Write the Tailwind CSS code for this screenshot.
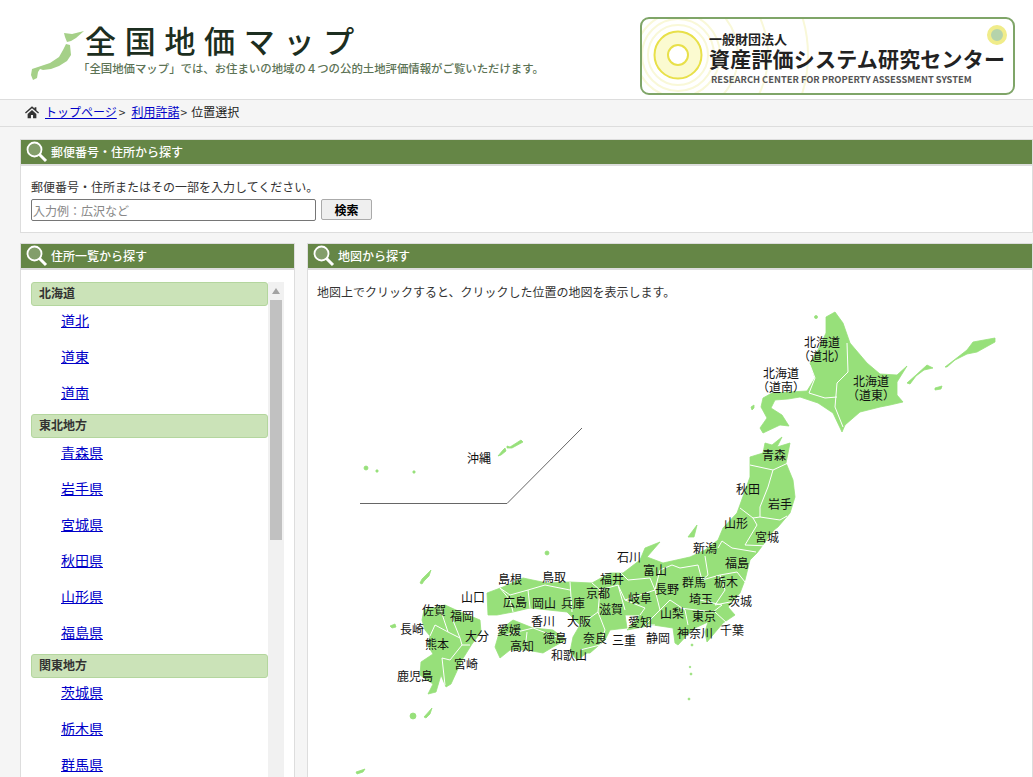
<!DOCTYPE html>
<html lang="ja">

<head>
  <meta charset="UTF-8" />
  <meta name="viewport" content="width=device-width, initial-scale=1.0" />
  <title>全国地価マップ</title>
  <script src="https://cdn.jsdelivr.net/npm/@tailwindcss/browser@4"></script>
</head>

<body class="h-[777px] overflow-hidden bg-[#f5f5f5] text-xs text-[#333] font-['Noto_Sans_CJK_JP','Noto_Sans',sans-serif]">

  <!-- ヘッダー -->
  <header class="flex h-[100px] justify-between border-b border-[#ddd] bg-white">
    <div class="ml-[30px] flex items-start">
      <svg class="mt-[29px] h-[48px] w-[48px] overflow-visible" viewBox="30 29 48 48">
        <path fill="#a5d088" d="M64 33l8 1 12-3-8 7-5 3-4 1-2-5zM66 44l4 1 1 10-4 6-8 5-8 3-8 1-3-1-2 3-1 6-4 2-2-5 1-6 9-3 9-3 9-6 4-7z" />
      </svg>
      <div class="pt-[23px]">
        <div class="pl-[7px] text-[31px] leading-[34px] tracking-[8.7px] text-[#1c2e20] font-medium">全国地価マップ</div>
        <div class="mt-[3px] text-[11.4px] leading-4 font-medium whitespace-nowrap text-[#5c7355]">「全国地価マップ」では、お住まいの地域の４つの公的土地評価情報がご覧いただけます。</div>
      </div>
    </div>
    <div class="relative mt-[17px] mr-[18px] flex h-[78px] w-[375px] overflow-hidden rounded-[9px] border-2 border-[#7fa568] bg-white">
      <svg class="mt-[10px] ml-[10px] h-[52px] w-[52px] overflow-visible" viewBox="0 0 52 52">
        <g fill="none" stroke="#f9f8d8" stroke-width="2">
          <circle cx="26" cy="26" r="30" />
          <circle cx="26" cy="26" r="36" />
          <circle cx="26" cy="26" r="42" />
          <circle cx="26" cy="26" r="60" />
          <circle cx="26" cy="26" r="90" />
          <circle cx="26" cy="26" r="130" />
        </g>
        <circle cx="26" cy="26" r="23.5" fill="#fbfad0" stroke="#e8e04a" stroke-width="2" />
        <circle cx="26" cy="26" r="10" fill="#fff" stroke="#e8e04a" stroke-width="2" />
      </svg>
      <div class="relative ml-[5px] pt-[13px]">
        <div class="text-[13px] leading-[14px] font-bold text-[#222]">一般財団法人</div>
        <div class="mt-px text-[21px] leading-[22px] font-bold tracking-[0.2px] whitespace-nowrap text-[#222]">資産評価システム研究センター</div>
        <div class="mt-1 ml-[2px] text-[9.300px] leading-3 font-bold whitespace-nowrap text-[#555]">RESEARCH CENTER FOR PROPERTY ASSESSMENT SYSTEM</div>
      </div>
      <span class="absolute top-[6px] right-[6px] h-5 w-5 rounded-full border-[4px] border-[#f0ec8a] bg-[#b5d3ab]"></span>
    </div>
  </header>

  <!-- パンくず -->
  <nav class="flex h-[27px] items-center border-b border-[#ddd] pb-[2px] pl-[25px] leading-4">
    <svg class="mr-[6px] h-[14px] w-[14px]" viewBox="0 0 16 16">
      <path fill="#333" d="M8 1.5L0 8.5l1 1.2L8 3.7l7 6 1-1.2-3-2.6V2.500h-2v1.600zM3 10.200V15h3.800v-3.500h2.400V15H13v-4.800L8 5.800z" />
    </svg>
    <a href="#" class="text-[#0000c8] underline">トップページ</a><span class="mr-[6px] ml-[2px]">&gt;</span>
    <a href="#" class="text-[#0000c8] underline">利用許諾</a><span class="mr-1 ml-px">&gt;</span><span class="text-[#222]">位置選択</span>
  </nav>

  <main class="px-5 pt-3">
    <!-- 郵便番号検索 -->
    <section class="h-[94px] w-[1013px] border border-[#ddd] bg-white">
      <h2 class="flex h-[26px] items-center border-b-2 border-[#ddd] bg-[#658646] pb-px pl-[5px] font-medium text-white">
        <svg class="mr-[3px] h-[22px] w-[22px]" viewBox="0 0 22 22">
          <circle cx="8.500" cy="8.500" r="7" fill="#ffffff33" stroke="#fff" stroke-width="1.800" />
          <path d="M13.500 13.500L20 20" stroke="#fff" stroke-width="3" />
        </svg>
        郵便番号・住所から探す
      </h2>
      <div class="px-[10px] pt-[12px]">
        <p class="mb-[3px] leading-[18px]">郵便番号・住所またはその一部を入力してください。</p>
        <div class="flex gap-[5px]">
          <input type="text" placeholder="入力例：広沢など" class="h-[22px] w-[285px] rounded-[2px] border border-[#767676] pl-px placeholder:text-[#888]" />
          <button class="h-[21px] w-[51px] rounded-[2px] border border-[#aaa] bg-[#efefef] font-bold text-black">検索</button>
        </div>
      </div>
    </section>

    <div class="mt-[10px] flex gap-3">
      <!-- 住所一覧 -->
      <section class="h-[600px] w-[275px] shrink-0 border border-[#ddd] bg-white">
        <h2 class="flex h-[26px] items-center border-b-2 border-[#ddd] bg-[#658646] pb-px pl-[5px] font-medium text-white">
          <svg class="mr-[3px] h-[22px] w-[22px]" viewBox="0 0 22 22">
            <circle cx="8.500" cy="8.500" r="7" fill="#ffffff33" stroke="#fff" stroke-width="1.800" />
            <path d="M13.500 13.500L20 20" stroke="#fff" stroke-width="3" />
          </svg>
          住所一覧から探す
        </h2>
        <div class="relative mt-3 ml-[10px] w-[253px] pr-4">
          <h3 class="h-6 rounded-[3px] border border-[#b4d69e] bg-[#cbe3b8] pl-[7px] leading-5 font-bold">北海道</h3>
          <ul class="pl-[30px] text-sm">
            <li class="h-9 pt-1 leading-5"><a href="#" class="text-[#0000c8] underline">道北</a></li>
            <li class="h-9 pt-1 leading-5"><a href="#" class="text-[#0000c8] underline">道東</a></li>
            <li class="h-9 pt-1 leading-5"><a href="#" class="text-[#0000c8] underline">道南</a></li>
          </ul>
          <h3 class="h-6 rounded-[3px] border border-[#b4d69e] bg-[#cbe3b8] pl-[7px] leading-5 font-bold">東北地方</h3>
          <ul class="pl-[30px] text-sm">
            <li class="h-9 pt-1 leading-5"><a href="#" class="text-[#0000c8] underline">青森県</a></li>
            <li class="h-9 pt-1 leading-5"><a href="#" class="text-[#0000c8] underline">岩手県</a></li>
            <li class="h-9 pt-1 leading-5"><a href="#" class="text-[#0000c8] underline">宮城県</a></li>
            <li class="h-9 pt-1 leading-5"><a href="#" class="text-[#0000c8] underline">秋田県</a></li>
            <li class="h-9 pt-1 leading-5"><a href="#" class="text-[#0000c8] underline">山形県</a></li>
            <li class="h-9 pt-1 leading-5"><a href="#" class="text-[#0000c8] underline">福島県</a></li>
          </ul>
          <h3 class="h-6 rounded-[3px] border border-[#b4d69e] bg-[#cbe3b8] pl-[7px] leading-5 font-bold">関東地方</h3>
          <ul class="pl-[30px] text-sm">
            <li class="h-9 pt-1 leading-5"><a href="#" class="text-[#0000c8] underline">茨城県</a></li>
            <li class="h-9 pt-1 leading-5"><a href="#" class="text-[#0000c8] underline">栃木県</a></li>
            <li class="h-9 pt-1 leading-5"><a href="#" class="text-[#0000c8] underline">群馬県</a></li>
          </ul>
          <!-- スクロールバー -->
          <div class="absolute top-0 right-0 h-[600px] w-4 bg-[#f1f1f1] px-[2px]">
            <svg class="mx-auto mt-[6px] mb-[6px] h-[6px] w-[8px]" viewBox="0 0 8 6"><path fill="#a3a3a3" d="M4 0l4 6H0z" /></svg>
            <div class="h-[240px] bg-[#c1c1c1]"></div>
          </div>
        </div>
      </section>

      <!-- 地図 -->
      <section class="h-[600px] w-[726px] border border-[#ddd] bg-white">
        <h2 class="flex h-[26px] items-center border-b-2 border-[#ddd] bg-[#658646] pb-px pl-[5px] font-medium text-white">
          <svg class="mr-[3px] h-[22px] w-[22px]" viewBox="0 0 22 22">
            <circle cx="8.500" cy="8.500" r="7" fill="#ffffff33" stroke="#fff" stroke-width="1.800" />
            <path d="M13.500 13.500L20 20" stroke="#fff" stroke-width="3" />
          </svg>
          地図から探す
        </h2>
        <p class="h-[32px] pt-[12px] pl-[9px] leading-[20px]">地図上でクリックすると、クリックした位置の地図を表示します。</p>
        <svg class="block h-[475px] w-[724px]" viewBox="308 302 724 475">
          <g fill="#97e07a" stroke="#97e07a" stroke-width="0.800" stroke-linejoin="round">
            <!-- 北海道 -->
            <path d="M835 312L826 317 826 333 818 350 810 363 815 378 807 391 790 392 772 393 763 398 761 407 767 418 760 428 763 433 780 425 789 426 782 415 771 408 775 400 788 399 800 397 818 403 833 413 842 432 845 425 860 412 880 407 890 405 903 402 897 395 897 382 907 366 897 375 880 374 867 363 850 343 843 323z" />
            <path d="M907 383L916 375 927 365 933 368 924 370 916 376 910 384z" />
            <path d="M945 367L958 357 967 350 973 342 995 338 995 342 977 352 967 354 955 360 947 367z" />
            <path d="M935 388L942 386 941 389 935 390z" />
            <circle cx="816" cy="317" r="1.500" />
            <path d="M751 407l3-2 0 3-2 2z" />
            <!-- 本州 -->
            <path d="M782 437L777 447 790 443 786 463 793 480 795 497 790 513 778 527 774 530 757 553 750 560 745 580 740 593 728 607 735 615 723 623 707 642 705 632 708 622 695 628 690 632 678 645 675 643 673 628 653 625 627 630 640 615 625 615 627 628 610 630 605 640 590 653 587 653 577 660 570 652 573 637 580 625 567 612 530 608 513 612 497 615 488 615 487 593 503 587 523 578 547 583 570 582 592 583 610 573 623 573 640 560 645 548 660 542 647 557 663 563 690 557 705 550 718 540 723 528 737 513 750 477 750 457 763 453 765 443 772 445z" />
            <path d="M688 537L697 525 694 537z" />
            <!-- 四国 -->
            <path d="M495 647L500 630 513 620 533 628 553 630 566 640 553 647 543 653 527 650 510 650 500 658z" />
            <!-- 九州 -->
            <path d="M424 610L445 605 456 610 480 620 481 632 472 644 462 660 451 684 446 687 441 675 436 692 428 694 433 684 420 675 421 662 433 654 428 646 430 636 425 630 422 620z" />
            <path d="M420 583l2-4 4-4 5-5-2 6-5 5-2 3z" />
            <circle cx="413" cy="716" r="3" />
            <path d="M424 717l8-9-2 6-4 4z" />
            <path d="M390 626l5-2 1 3-4 1z" />
            <circle cx="547" cy="553" r="2" />
            <circle cx="692" cy="645" r="1" />
            <circle cx="690" cy="667" r="0.800" />
            <circle cx="691" cy="674" r="1" />
            <circle cx="689" cy="699" r="1" />
            <path d="M356 772l9-3-2 3-6 2z" />
            <!-- 沖縄 -->
            <path d="M498 456l5-6 2-2 1 3-5 4z" />
            <path d="M507 446l3 1 11-7 2 2-11 6-5 0z" />
            <circle cx="366" cy="468" r="2" />
            <circle cx="377" cy="471" r="1.200" />
            <circle cx="414" cy="472" r="1.200" />
          </g>
          <!-- 県境 -->
          <path fill="none" stroke="#fff" d="M847 343L848 372 837 383 835 407 843 427M810 365L815 378 809 393 825 398 837 397M750 465L773 470 788 463M773 470L768 487 760 507 760 517 780 520 787 516M740 508L753 518 757 525 745 545M760 517L753 518M745 545L770 546M718 548L722 541 732 548 756 552M705 556L708 575 702 580 720 575 737 572 745 582M702 580L698 565 680 568 672 565 660 570 655 590M720 575L725 590 715 605 740 600M700 600L722 605 713 612 680 608M715 612L727 623M670 600L685 610 688 625M655 590L660 610 670 600M660 610L645 625 655 625M620 572L628 580 650 578 655 590 625 600 618 585 600 590 592 583M618 585L625 610M625 600L645 608 640 615M600 590L598 612 605 630 600 645 580 650M598 612L580 625M570 582L572 612M530 608L528 590 545 585 570 590M500 588L510 595 528 590M513 612L510 600 500 588M505 635L533 628 565 640M527 632L525 650M440 608L448 632 460 638 462 645 450 660 442 658 445 685M448 632L435 625 430 636M460 638L452 618M462 645L470 645" />
          <!-- 沖縄の区切り線 -->
          <path fill="none" stroke="#666" d="M360 503.500H507L582 428" />
          <!-- 地名 -->
          <g font-size="12" text-anchor="middle" fill="#111">
            <text><tspan x="822" y="347">北海道</tspan><tspan x="822" y="361">（道北）</tspan></text>
            <text><tspan x="781" y="378">北海道</tspan><tspan x="781" y="392">（道南）</tspan></text>
            <text><tspan x="871" y="386">北海道</tspan><tspan x="871" y="400">（道東）</tspan></text>
            <text x="774" y="460">青森</text><text x="748" y="494">秋田</text><text x="780" y="509">岩手</text>
            <text x="736" y="528">山形</text><text x="767" y="542">宮城</text><text x="705" y="553">新潟</text>
            <text x="737" y="568">福島</text><text x="629" y="562">石川</text><text x="655" y="575">富山</text>
            <text x="612" y="584">福井</text><text x="726" y="587">栃木</text><text x="694" y="587">群馬</text>
            <text x="667" y="594">長野</text><text x="598" y="598">京都</text><text x="640" y="603">岐阜</text>
            <text x="701" y="604">埼玉</text><text x="740" y="606">茨城</text><text x="611" y="614">滋賀</text>
            <text x="672" y="618">山梨</text><text x="704" y="621">東京</text><text x="640" y="627">愛知</text>
            <text x="732" y="635">千葉</text><text x="695" y="638">神奈川</text><text x="658" y="643">静岡</text>
            <text x="624" y="645">三重</text><text x="595" y="643">奈良</text><text x="579" y="626">大阪</text>
            <text x="573" y="608">兵庫</text><text x="544" y="608">岡山</text><text x="515" y="607">広島</text>
            <text x="554" y="582">鳥取</text><text x="510" y="584">島根</text><text x="473" y="602">山口</text>
            <text x="462" y="621">福岡</text><text x="434" y="615">佐賀</text><text x="412" y="634">長崎</text>
            <text x="477" y="641">大分</text><text x="437" y="649">熊本</text><text x="466" y="669">宮崎</text>
            <text x="415" y="681">鹿児島</text><text x="509" y="635">愛媛</text><text x="543" y="626">香川</text>
            <text x="555" y="643">徳島</text><text x="522" y="651">高知</text><text x="569" y="660">和歌山</text>
            <text x="479" y="463">沖縄</text>
          </g>
        </svg>
      </section>
    </div>
  </main>

</body>

</html>
